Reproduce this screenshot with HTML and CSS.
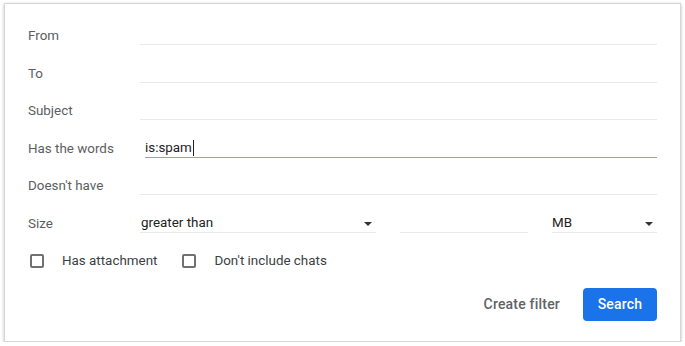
FILE: index.html
```html
<!DOCTYPE html>
<html lang="en">
<head>
    <meta charset="UTF-8">
    <title>Search options</title>
    <link rel="stylesheet" href="styles.css">
</head>
<body>
    <div class="dialog">
        <div class="row">
            <label class="label">From</label>
            <div class="field"></div>
        </div>
        <div class="row">
            <label class="label">To</label>
            <div class="field"></div>
        </div>
        <div class="row">
            <label class="label">Subject</label>
            <div class="field"></div>
        </div>
        <div class="row">
            <label class="label">Has the words</label>
            <div class="field focused">is:spam<span class="caret"></span></div>
        </div>
        <div class="row">
            <label class="label">Doesn't have</label>
            <div class="field"></div>
        </div>
        <div class="row">
            <label class="label">Size</label>
            <div class="size-group">
                <div class="select size-op">greater than<span class="arrow"></span></div>
                <div class="field size-num"></div>
                <div class="select size-unit">MB<span class="arrow"></span></div>
            </div>
        </div>
        <div class="row checks">
            <div class="check"><span class="box"></span>Has attachment</div>
            <div class="check"><span class="box"></span>Don't include chats</div>
        </div>
        <div class="actions">
            <button class="btn-text">Create filter</button>
            <button class="btn-primary">Search</button>
        </div>
    </div>
</body>
</html>
```

FILE: styles.css
```css
body {
    margin: 0;
    background: #fff;
    font-family: Roboto, 'Liberation Sans', sans-serif;
    font-size: 13.4px;
    color: #222;
}

.dialog {
    margin: 3px 0 0 4px;
    width: 677px;
    height: 339px;
    border: 1px solid #d6d6d6;
    box-shadow: 0 1px 3px rgba(0, 0, 0, 0.25);
    padding: 13px 0 0 0;
    box-sizing: border-box;
    background: #fff;
}

.row {
    display: flex;
    align-items: center;
    height: 37.5px;
    padding: 0 23px 0 23px;
}

.label {
    width: 112px;
    flex-shrink: 0;
    color: #5a5e63;
}

.field {
    flex: 1;
    height: 19px;
    box-sizing: border-box;
    border-bottom: 1px solid #eaeaea;
    line-height: 18px;
    color: #222;
}

.field.focused {
    margin-left: 5px;
    border-bottom: 1px solid #7aa5ee;
    display: flex;
    align-items: center;
}

.caret {
    display: inline-block;
    width: 1px;
    height: 16px;
    background: #222;
    margin-left: 1px;
}

.size-group {
    flex: 1;
    display: flex;
    gap: 24px;
}

.select {
    position: relative;
    height: 19px;
    box-sizing: border-box;
    border-bottom: 1px solid #eaeaea;
    line-height: 18px;
    padding-left: 1px;
    color: #222;
}

.size-op {
    width: 236px;
}

.size-num {
    flex: none;
    width: 128px;
}

.size-unit {
    flex: 1;
    padding-left: 0;
}

.arrow {
    position: absolute;
    right: 4px;
    top: 8px;
    width: 0;
    height: 0;
    border-left: 4px solid transparent;
    border-right: 4px solid transparent;
    border-top: 4px solid #333;
}

.check {
    display: flex;
    align-items: center;
    color: #3c4043;
    margin-right: 23px;
}

.box {
    width: 14px;
    height: 14px;
    box-sizing: border-box;
    border: 2px solid #6f7175;
    border-radius: 2px;
    margin: 0 18px 0 2px;
}

.actions {
    display: flex;
    justify-content: flex-end;
    align-items: center;
    gap: 23px;
    padding: 8px 23px 0 0;
}

.btn-text {
    border: none;
    background: none;
    font-family: Roboto, 'Liberation Sans', sans-serif;
    font-size: 14px;
    font-weight: 500;
    color: #5f6368;
    padding: 0;
    letter-spacing: 0.2px;
}

.btn-primary {
    width: 74px;
    height: 33px;
    border: none;
    border-radius: 4px;
    background: #1a73e8;
    color: #fff;
    font-family: Roboto, 'Liberation Sans', sans-serif;
    font-size: 14px;
    font-weight: 500;
    letter-spacing: 0.2px;
}
```
